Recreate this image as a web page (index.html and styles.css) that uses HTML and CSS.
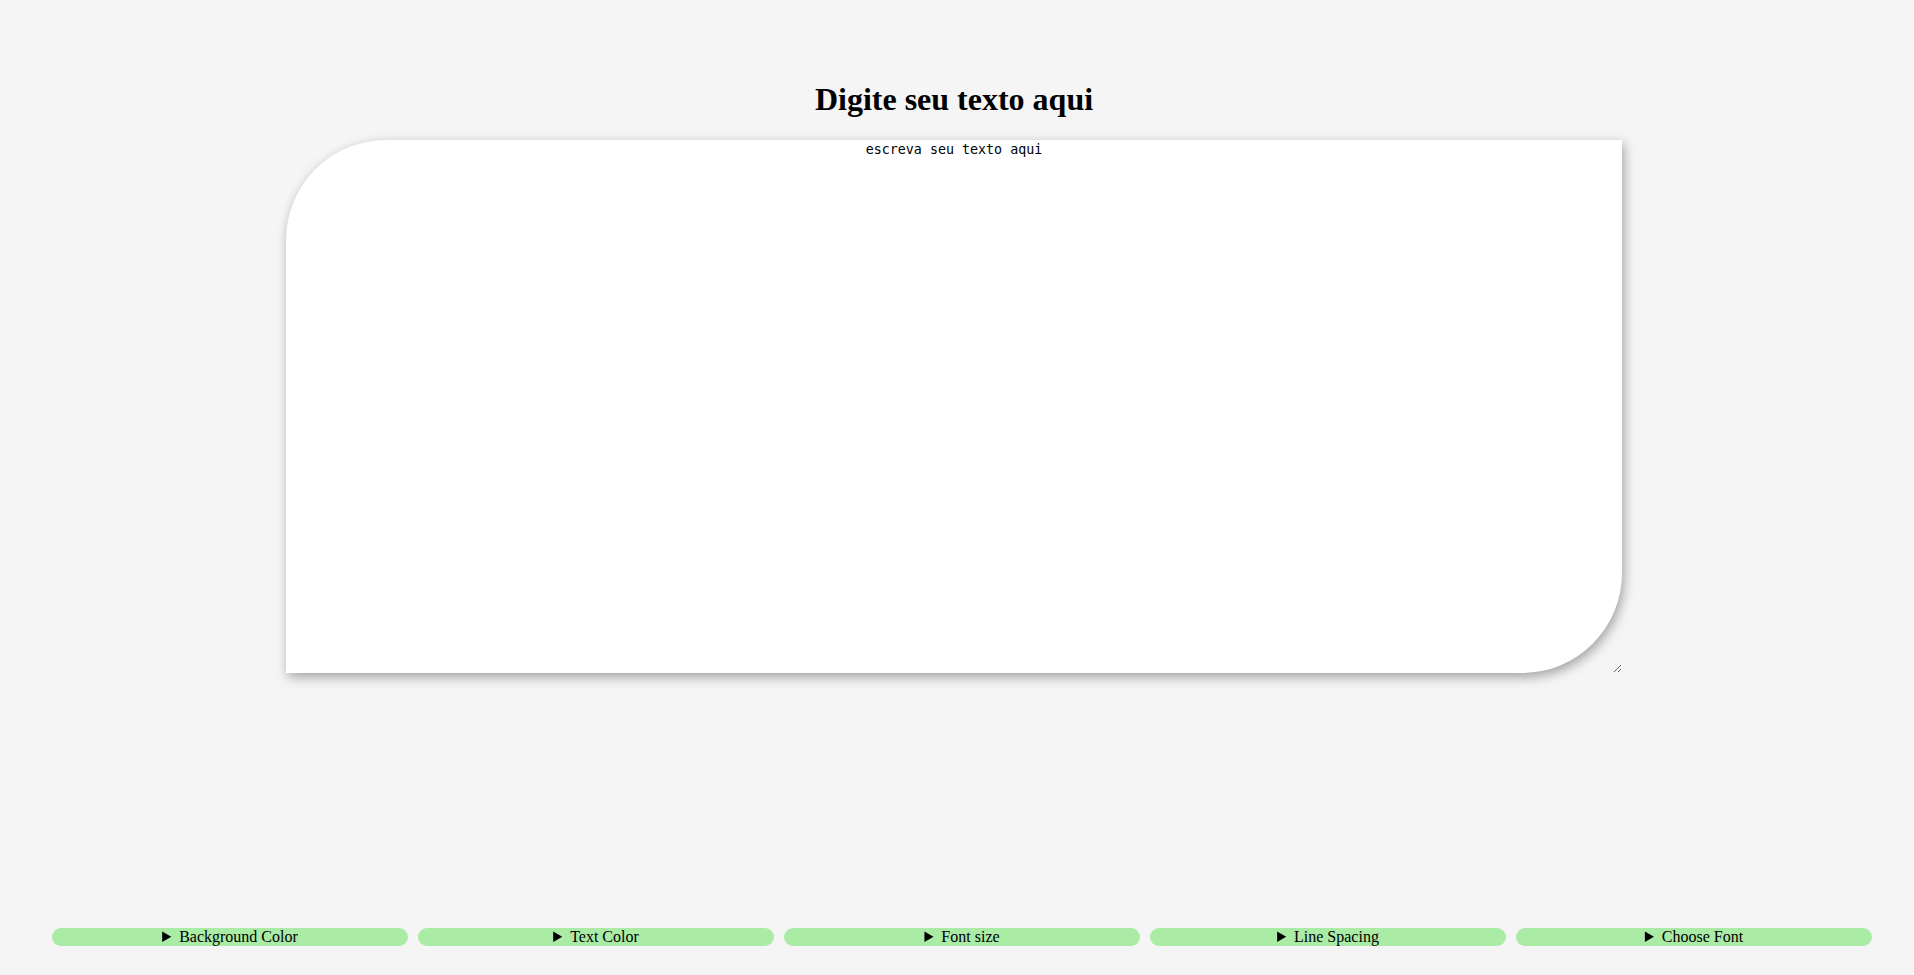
FILE: index.html
```html
<!DOCTYPE html>
<html lang="pt">
<head>
<meta charset="utf-8">
<title>Editor</title>
<link rel="stylesheet" href="styles.css">
</head>
<body>
<div class="page">
  <main class="editor">
    <h1 class="title">Digite seu texto aqui</h1>
    <textarea class="text-area">escreva seu texto aqui</textarea>
  </main>
  <footer class="controls">
    <details class="control"><summary>Background Color</summary></details>
    <details class="control"><summary>Text Color</summary></details>
    <details class="control"><summary>Font size</summary></details>
    <details class="control"><summary>Line Spacing</summary></details>
    <details class="control"><summary>Choose Font</summary></details>
  </footer>
</div>
</body>
</html>
```

FILE: styles.css
```css
html, body {
  margin: 0;
  padding: 0;
  background: #f5f5f5;
  font-family: "Liberation Serif", "Times New Roman", serif;
}

.page {
  min-height: 100vh;
  display: flex;
  flex-direction: column;
  box-sizing: border-box;
  padding-bottom: 29px;
}

.editor {
  display: flex;
  flex-direction: column;
  align-items: center;
  padding-top: 81px;
  padding-right: 6px;
}

.title {
  margin: 0 0 22px 0;
  font-size: 32px;
  font-weight: bold;
  text-align: center;
  line-height: 37px;
  color: #000;
}

.text-area {
  display: block;
  width: 1336px;
  height: 533px;
  box-sizing: border-box;
  border: none;
  outline: none;
  background: #fff;
  border-radius: 100px 0 100px 0;
  box-shadow: 2px 4px 12px rgba(0, 0, 0, 0.35);
  font-family: "DejaVu Sans Mono", monospace;
  font-size: 13.33px;
  text-align: center;
  padding: 2px;
  color: #000;
}

.controls {
  margin-top: auto;
  display: flex;
  gap: 10px;
  padding: 0 42px 0 52px;
}

.control {
  flex: 1;
  min-width: 0;
}

.control summary {
  background: #aaeba6;
  border-radius: 9px;
  height: 18px;
  line-height: 18px;
  font-size: 16px;
  text-align: center;
  color: #000;
  cursor: pointer;
}
```
